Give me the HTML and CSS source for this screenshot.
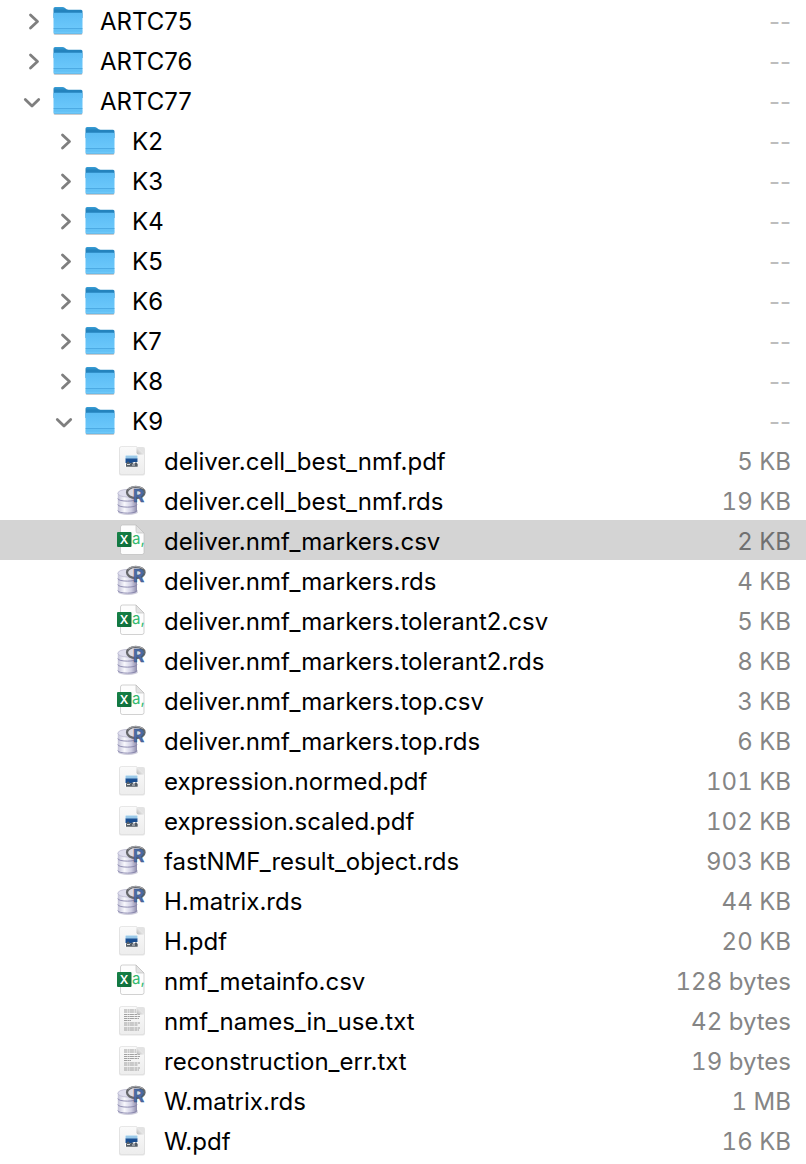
FILE: index.html
```
<!DOCTYPE html>
<html lang="en">
<head>
<meta charset="utf-8">
<meta name="viewport" content="width=device-width, initial-scale=1">
<title>Files</title>
<link rel="stylesheet" href="styles.css">
<script src="files.js" defer></script>
</head>
<body>
<svg class="sprite" aria-hidden="true">
  <defs>
    <linearGradient id="g-back" x1="0" y1="0" x2="0" y2="1"><stop offset="0" stop-color="#3a9fd8"/><stop offset=".3" stop-color="#2483bd"/></linearGradient>
    <linearGradient id="g-front" x1="0" y1="0" x2="0" y2="1"><stop offset="0" stop-color="#5bbcf4"/><stop offset="1" stop-color="#70cbfd"/></linearGradient>
    <linearGradient id="g-page" x1="0" y1="0" x2="0" y2="1"><stop offset="0" stop-color="#fafafa"/><stop offset="1" stop-color="#ededed"/></linearGradient>
    <linearGradient id="g-fold" x1="0" y1="1" x2="1" y2="0"><stop offset="0" stop-color="#b4b4b4"/><stop offset=".5" stop-color="#e9e9e9"/><stop offset="1" stop-color="#fff"/></linearGradient>
    <linearGradient id="g-disk" x1="0" y1="0" x2="1" y2="0"><stop offset="0" stop-color="#c3c2d8"/><stop offset=".35" stop-color="#f8f8fd"/><stop offset=".7" stop-color="#cfcee3"/><stop offset="1" stop-color="#8d8baa"/></linearGradient>
    <linearGradient id="g-green" x1="0" y1="0" x2="1" y2="1"><stop offset="0" stop-color="#188348"/><stop offset="1" stop-color="#0c6b39"/></linearGradient>
  </defs>
  <symbol id="chevron" viewBox="0 0 20 20"><path d="M8.500 5 L15.500 11.500 L8.500 18" fill="none" stroke="#7f7f7f" stroke-width="2.800" stroke-linecap="round" stroke-linejoin="round"/></symbol>
  <symbol id="chevron-open" viewBox="0 0 20 20"><path d="M3.300 9.500 L10 16 L16.700 9.500" fill="none" stroke="#7f7f7f" stroke-width="2.800" stroke-linecap="round" stroke-linejoin="round"/></symbol>
  <symbol id="folder" viewBox="0 0 32 32">
    <rect x="1.600" y="27" width="28.800" height="3.900" rx="1.500" fill="#8b8b8b" opacity=".45"/>
    <path d="M1.500 4.600Q1.500 3 3.100 3H10.500Q12 3 13 4Q14.500 5.800 16.500 5.800H29Q30.500 5.800 30.500 7.300V14H1.500Z" fill="url(#g-back)"/>
    <path d="M1.500 10Q1.500 8.700 2.800 8.700H29.200Q30.500 8.700 30.500 10V28.200Q30.500 29.700 29 29.700H3Q1.500 29.700 1.500 28.200Z" fill="url(#g-front)"/>
    <path d="M1.500 24.700H30.500" stroke="#3b9bd5" stroke-width=".8"/>
    <path d="M1.500 27H30.500M2 29.400H30" stroke="#4eaee5" stroke-width=".6"/>
  </symbol>
  <symbol id="pdf" viewBox="0 0 32 32">
    <rect x="3" y="3" width="26" height="28.500" rx="2" fill="#999" opacity=".28"/>
    <path d="M5.500 2.500H20.500L28.500 10.500V28.500Q28.500 30.500 26.500 30.500H5.500Q3.500 30.500 3.500 28.500V4.500Q3.500 2.500 5.500 2.500Z" fill="url(#g-page)" stroke="#dedede" stroke-width=".7"/>
    <path d="M20.500 2.500V8.500Q20.500 10.500 22.500 10.500H28.500Z" fill="url(#g-fold)"/>
    <rect x="9" y="11" width="13" height="12" fill="#fff"/>
    <rect x="9.500" y="11.500" width="12" height="3.500" fill="#9ac9e8"/>
    <path d="M9.500 14.500H21.500V18H18L16 19H9.500Z" fill="#1a4e91"/>
    <path d="M10 19.700L12 17.200L14 19.500L16 18.400L18 20L20 18L21.700 20V22.700H10Z" fill="#555d66"/>
    <path d="M11 20.500H14M16 21H19" stroke="#d6d9dc" stroke-width="1"/>
  </symbol>
  <symbol id="txt" viewBox="0 0 32 32">
    <rect x="3" y="3" width="26" height="28.500" rx="2" fill="#999" opacity=".28"/>
    <path d="M5.500 2.500H20.500L28.500 10.500V28.500Q28.500 30.500 26.500 30.500H5.500Q3.500 30.500 3.500 28.500V4.500Q3.500 2.500 5.500 2.500Z" fill="url(#g-page)" stroke="#dedede" stroke-width=".7"/>
    <g fill="none" stroke="#a0a0a0" stroke-width="1.100" stroke-dasharray="3 .5 2 .4 4 .6">
      <path d="M8 6H20M8 8H20M8 10.500H24M8 12.500H24M8 14.500H23M8 16.500H15M8 19H24M8 21H22M8 24H24M8 26H23"/>
    </g>
    <path d="M20.500 2.500V8.500Q20.500 10.500 22.500 10.500H28.500Z" fill="url(#g-fold)"/>
  </symbol>
  <symbol id="rds" viewBox="0 0 32 32">
    <ellipse cx="12" cy="28" rx="10" ry="3" fill="#8583a5" opacity=".4"/>
    <path d="M1.800 9V26.500C1.800 31 21 31 21 26.500V9Z" fill="url(#g-disk)"/>
    <path d="M1.800 14.500C1.800 18 21 18 21 14.500M1.800 20.500C1.800 24 21 24 21 20.500M1.800 26.500C1.800 30 21 30 21 26.500" fill="none" stroke="#8784ab" stroke-width=".9"/>
    <ellipse cx="11.400" cy="9.200" rx="9.500" ry="3.800" fill="#e0dfef" stroke="#aaa8c5" stroke-width=".6"/>
    <ellipse cx="19.800" cy="8.500" rx="8.800" ry="5.600" fill="#dcdce6" stroke="#66686c" stroke-width="2.200"/>
    <path d="M12 5Q19 .2 27 4.500" fill="none" stroke="#b4b6bb" stroke-width=".9"/>
  </symbol>
  <symbol id="csv" viewBox="0 0 32 32">
    <path d="M6.500 1H20L28 9V28.500Q28 30.500 26 30.500H6.500Q4.500 30.500 4.500 28.500V3Q4.500 1 6.500 1Z" fill="#fdfdfd" stroke="#bdbdbd" stroke-width=".7"/>
    <path d="M20 1V7Q20 9 22 9H28Z" fill="#e3e3e3" stroke="#b9b9b9" stroke-width=".6"/>
    <rect x="1" y="8" width="14.500" height="15" rx="1" fill="url(#g-green)"/>
  </symbol>
</svg>
<table class="files" aria-label="Files">
  <tbody id="rows"></tbody>
</table>
</body>
</html>
```
FILE: styles.css
```
body {
  margin: 0;
  background: #fff;
  color: #000;
  font-family: Inter, "Liberation Sans", sans-serif;
  font-size: 24px;
  line-height: 36px;
}

.sprite {
  position: absolute;
  width: 0;
  height: 0;
}

.files {
  width: 100%;
  border-collapse: collapse;
}

.files td {
  height: 40px;
  padding: 0;
  white-space: nowrap;
}

.entry {
  display: flex;
  align-items: center;
  padding-left: 22px;
}

.level-1 { padding-left: 54px; }
.level-2 { padding-left: 86px; }

.toggle,
.spacer {
  width: 20px;
  height: 20px;
  margin-right: 10px;
}

.toggle {
  display: block;
  padding: 0;
  border: 0;
  background: none;
}

.toggle svg,
.icon {
  display: block;
}

.toggle svg {
  width: 20px;
  height: 20px;
}

.icon {
  width: 32px;
  height: 32px;
  margin-right: 16px;
}

.name {
  padding-top: 4px;
}

.files .size {
  box-sizing: border-box;
  padding: 4px 15px 0 0;
  color: #858585;
  font-variant-numeric: tabular-nums;
  text-align: right;
}

.files .empty {
  color: #bdbdbd;
  font-variant-numeric: normal;
}

.selected {
  background: #d4d4d4;
}

.files .selected .size {
  color: #707070;
}

.glyph {
  font-family: Inter, sans-serif;
}

.glyph-r {
  font-size: 17px;
  font-weight: 700;
  fill: #4c6ba6;
  stroke: #34507f;
  stroke-width: 0.5px;
}

.glyph-x {
  font-size: 12px;
  font-weight: 600;
  text-anchor: middle;
  fill: #fff;
}

.glyph-a {
  font-size: 15px;
  fill: #31b96d;
}
```
FILE: files.js
```
const files = [
  [0, "folder", "ARTC75", "--"],
  [0, "folder", "ARTC76", "--"],
  [0, "folder", "ARTC77", "--", "open"],
  [1, "folder", "K2", "--"],
  [1, "folder", "K3", "--"],
  [1, "folder", "K4", "--"],
  [1, "folder", "K5", "--"],
  [1, "folder", "K6", "--"],
  [1, "folder", "K7", "--"],
  [1, "folder", "K8", "--"],
  [1, "folder", "K9", "--", "open"],
  [2, "pdf", "deliver.cell_best_nmf.pdf", "5 KB"],
  [2, "rds", "deliver.cell_best_nmf.rds", "19 KB"],
  [2, "csv", "deliver.nmf_markers.csv", "2 KB", "selected"],
  [2, "rds", "deliver.nmf_markers.rds", "4 KB"],
  [2, "csv", "deliver.nmf_markers.tolerant2.csv", "5 KB"],
  [2, "rds", "deliver.nmf_markers.tolerant2.rds", "8 KB"],
  [2, "csv", "deliver.nmf_markers.top.csv", "3 KB"],
  [2, "rds", "deliver.nmf_markers.top.rds", "6 KB"],
  [2, "pdf", "expression.normed.pdf", "101 KB"],
  [2, "pdf", "expression.scaled.pdf", "102 KB"],
  [2, "rds", "fastNMF_result_object.rds", "903 KB"],
  [2, "rds", "H.matrix.rds", "44 KB"],
  [2, "pdf", "H.pdf", "20 KB"],
  [2, "csv", "nmf_metainfo.csv", "128 bytes"],
  [2, "txt", "nmf_names_in_use.txt", "42 bytes"],
  [2, "txt", "reconstruction_err.txt", "19 bytes"],
  [2, "rds", "W.matrix.rds", "1 MB"],
  [2, "pdf", "W.pdf", "16 KB"]
];

// Letters drawn on top of the file type icons.
const letters = {
  rds: `<text x="17" y="18" class="glyph glyph-r">R</text>`,
  csv: `<text x="8" y="20" class="glyph glyph-x">X</text><text x="16" y="20" class="glyph glyph-a">a,</text>`
};

document.getElementById("rows").innerHTML = files.map(([level, kind, name, size, state]) => {
  const open = state === "open";
  const lead = kind === "folder"
    ? `<button class="toggle" type="button" aria-label="${name}" aria-expanded="${open}"><svg aria-hidden="true"><use href="#${open ? "chevron-open" : "chevron"}"/></svg></button>`
    : `<span class="spacer"></span>`;
  return `<tr class="${state === "selected" ? "selected" : "row"}">
    <td><div class="entry level-${level}">${lead}<svg class="icon" viewBox="0 0 32 32" aria-hidden="true"><use href="#${kind}"/>${letters[kind] || ""}</svg><span class="name">${name}</span></div></td>
    <td class="size${size === "--" ? " empty" : ""}">${size}</td>
  </tr>`;
}).join("");
```
